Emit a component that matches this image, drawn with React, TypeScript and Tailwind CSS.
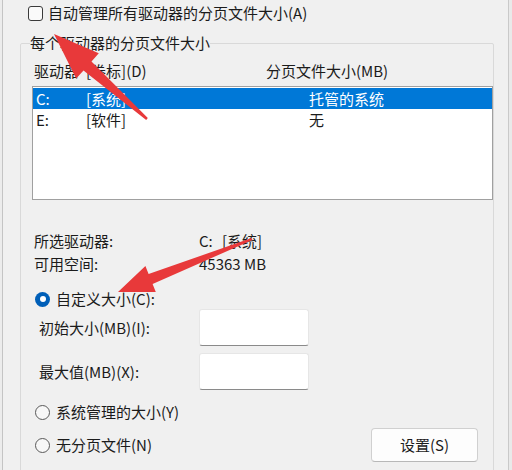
import React from "react";

const font = { fontFamily: '"Noto Sans CJK SC", "Noto Sans", sans-serif' };

function Radio({ checked }: { checked?: boolean }) {
  return checked ? (
    <span className="w-[15px] h-[15px] rounded-full bg-[#005fb8] flex items-center justify-center shrink-0">
      <span className="w-[6px] h-[6px] rounded-full bg-white" />
    </span>
  ) : (
    <span className="w-[15px] h-[15px] rounded-full border border-[#595959] bg-[#f7f7f7] shrink-0" />
  );
}

function Input() {
  return (
    <div className="w-[110px] h-[37px] bg-white rounded-[3px] border border-[#e6e6e6] border-b-[#8a8a8a]" />
  );
}

export default function App() {
  return (
    <div
      className="relative w-[512px] h-[470px] overflow-hidden bg-[#f0f0f0] text-[15px] leading-[20px] text-[#1b1b1b] flex"
      style={font}
    >
      <div className="w-[3px] shrink-0 bg-[#ececec] border-r border-[#c4c4c4]" />
      <div className="w-[506px] shrink-0 flex flex-col border-r border-[#c9c9c9]">
        {/* top checkbox */}
        <div className="flex items-center mt-[3px] ml-[25px] h-[20px]">
          <span className="w-[15px] h-[15px] rounded-[3px] border border-[#3a3a3a] bg-[#fafafa] shrink-0" />
          <span className="ml-[5px]">自动管理所有驱动器的分页文件大小(A)</span>
        </div>

        <fieldset className="mt-[10px] ml-[17px] w-[472px] border border-[#d9d9d9] rounded-[2px] pl-[11px] pb-[40px]">
          <legend className="ml-[-2px] px-0 leading-[20px]">每个驱动器的分页文件大小</legend>

          <div className="flex mt-[8px] ml-[2px] h-[20px]">
            <span className="w-[52px]">驱动器</span>
            <span className="w-[180px]">[卷标](D)</span>
            <span>分页文件大小(MB)</span>
          </div>

          <div className="mt-[5px] w-[461px] h-[114px] bg-white border border-[#a0a0a0] pt-[1px]">
            <div className="flex items-center h-[21px] bg-[#0078d7] text-white pl-[3px]">
              <span className="w-[50px]">C:</span>
              <span className="w-[223px]">[系统]</span>
              <span>托管的系统</span>
            </div>
            <div className="flex items-center h-[21px] pl-[3px]">
              <span className="w-[50px]">E:</span>
              <span className="w-[223px]">[软件]</span>
              <span>无</span>
            </div>
          </div>

          <div className="flex mt-[31px] ml-[2px] h-[20px]">
            <span className="w-[165px]">所选驱动器:</span>
            <span className="w-[23px]">C:</span>
            <span>[系统]</span>
          </div>
          <div className="flex mt-[3px] ml-[2px] h-[20px]">
            <span className="w-[165px]">可用空间:</span>
            <span>45363 MB</span>
          </div>

          <div className="flex items-center mt-[15px] ml-[3px] h-[20px]">
            <Radio checked />
            <span className="ml-[6px]">自定义大小(C):</span>
          </div>

          <div className="flex items-center ml-[7px]">
            <span className="w-[160px]">初始大小(MB)(I):</span>
            <Input />
          </div>
          <div className="flex items-center ml-[7px] mt-[7px]">
            <span className="w-[160px]">最大值(MB)(X):</span>
            <Input />
          </div>

          <div className="flex items-center mt-[12px] ml-[3px] h-[20px]">
            <Radio />
            <span className="ml-[6px]">系统管理的大小(Y)</span>
          </div>

          <div className="flex items-center mt-[6px] ml-[3px] h-[34px]">
            <Radio />
            <span className="ml-[6px] w-[315px]">无分页文件(N)</span>
            <button className="w-[107px] h-[34px] bg-[#fdfdfd] border border-[#d0d0d0] border-b-[#b8b8b8] rounded-[4px] text-[15px] leading-[20px]">
              设置(S)
            </button>
          </div>
        </fieldset>
      </div>
      <div className="flex-1 bg-[#e9e9e9]" />

      <svg
        className="absolute inset-0 pointer-events-none"
        width="512"
        height="470"
        viewBox="0 0 512 470"
      >
        <polygon
          fill="#e8393a"
          points="54,34 98.8,53.2 91.5,61.4 147.8,118.1 146.2,119.9 83.5,70.4 76.2,78.6"
        />
        <polygon
          fill="#e8393a"
          points="118,292 145.4,266 148.6,273.9 251.6,238.1 252.4,239.9 152.6,284.1 155.8,292"
        />
      </svg>
    </div>
  );
}
